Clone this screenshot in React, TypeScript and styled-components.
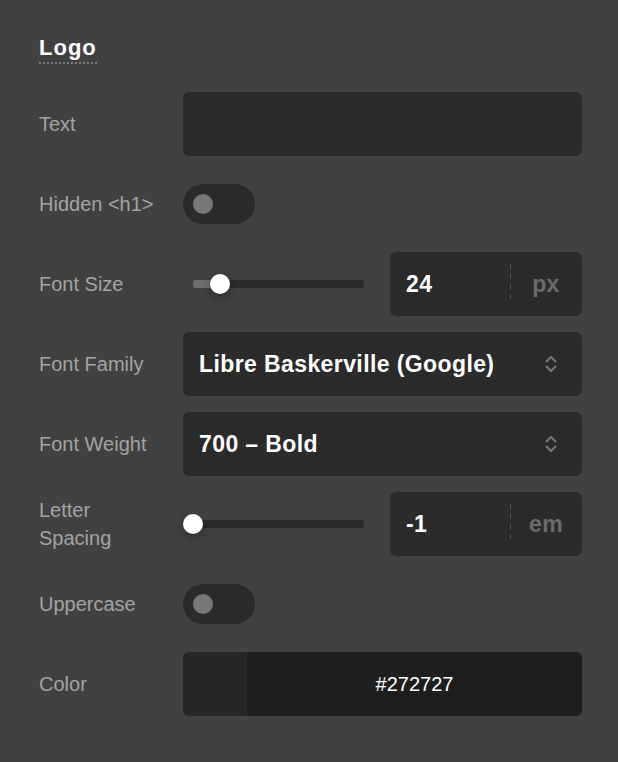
import React from "react";
import styled, { createGlobalStyle } from "styled-components";

const GlobalStyle = createGlobalStyle`
  html, body {
    margin: 0;
    background: #414141;
    font-family: "Liberation Sans", Arial, sans-serif;
  }
`;

const Panel = styled.div`
  padding: 37px 36px 46px 39px;
`;

const Title = styled.h2`
  display: inline-block;
  margin: 0 0 28px;
  padding-bottom: 3px;
  font-size: 22px;
  line-height: 22px;
  font-weight: 700;
  letter-spacing: 1px;
  color: #ffffff;
  border-bottom: 2px dotted #7a7a7a;
`;

const Grid = styled.div`
  display: grid;
  grid-template-columns: 144px 1fr;
  grid-auto-rows: 64px;
  row-gap: 16px;
`;

const Label = styled.label`
  align-self: center;
  max-width: 120px;
  font-size: 20px;
  line-height: 28px;
  color: #a3a3a3;
`;

const Field = styled.div`
  display: flex;
  align-items: center;
  gap: 16px;
  min-width: 0;
`;

const TextBox = styled.input`
  flex: 1;
  height: 64px;
  box-sizing: border-box;
  border: none;
  border-radius: 6px;
  background: #2b2b2b;
  padding: 0 16px;
  color: #fff;
  font: inherit;
  font-size: 20px;
  outline: none;
`;

const SwitchTrack = styled.div`
  position: relative;
  width: 72px;
  height: 40px;
  border-radius: 20px;
  background: #2b2b2b;
`;

const SwitchKnob = styled.span<{ $on?: boolean }>`
  position: absolute;
  top: 10px;
  left: ${(p) => (p.$on ? "42px" : "10px")};
  width: 20px;
  height: 20px;
  border-radius: 50%;
  background: #777777;
`;

const SliderWrap = styled.div`
  flex: 1;
  padding: 0 10px;
  height: 64px;
  display: flex;
  align-items: center;
`;

const Track = styled.div`
  position: relative;
  flex: 1;
  height: 8px;
  border-radius: 2px;
  background: #2b2b2b;
`;

const Fill = styled.div`
  position: absolute;
  left: 0;
  top: 0;
  bottom: 0;
  border-radius: 2px;
  background: #6e6e6e;
`;

const Thumb = styled.span`
  position: absolute;
  top: 50%;
  width: 20px;
  height: 20px;
  border-radius: 50%;
  background: #ffffff;
  transform: translate(-50%, -50%);
  box-shadow: 0 3px 8px rgba(0, 0, 0, 0.35);
`;

const NumberBox = styled.div`
  width: 192px;
  height: 64px;
  flex: none;
  display: flex;
  align-items: center;
  border-radius: 6px;
  background: #2b2b2b;
`;

const BoldValue = styled.span`
  font-size: 23px;
  font-weight: 700;
  letter-spacing: 0.4px;
  color: #ffffff;
`;

const NumberValue = styled(BoldValue)`
  flex: 1;
  padding-left: 16px;
`;

const Unit = styled.span`
  width: 72px;
  height: 40px;
  display: flex;
  align-items: center;
  justify-content: center;
  background: repeating-linear-gradient(
      to bottom,
      #555555 0 5px,
      transparent 5px 10px
    )
    left top / 1px 100% no-repeat;
  font-size: 23px;
  font-weight: 700;
  letter-spacing: 0.4px;
  color: #6b6b6b;
`;

const SelectBox = styled.div`
  flex: 1;
  height: 64px;
  display: flex;
  align-items: center;
  justify-content: space-between;
  padding: 0 25px 0 16px;
  border-radius: 6px;
  background: #2b2b2b;
`;

const ColorBox = styled.div`
  flex: 1;
  height: 64px;
  display: flex;
  border-radius: 6px;
  overflow: hidden;
  background: #1e1e1e;
`;

const Swatch = styled.div<{ $color: string }>`
  width: 64px;
  background: ${(p) => p.$color};
`;

const HexText = styled.div`
  flex: 1;
  display: flex;
  align-items: center;
  justify-content: center;
  font-size: 20px;
  color: #ffffff;
`;

const Chevrons = () => (
  <svg width="12" height="18" viewBox="0 0 12 18" fill="none">
    <polyline points="1,7 6,2 11,7" stroke="#7a7a7a" strokeWidth="2" />
    <polyline points="1,11 6,16 11,11" stroke="#7a7a7a" strokeWidth="2" />
  </svg>
);

const Switch: React.FC<{ on?: boolean }> = ({ on }) => (
  <SwitchTrack>
    <SwitchKnob $on={on} />
  </SwitchTrack>
);

interface SliderProps {
  value: number;
  min: number;
  max: number;
  unit: string;
}

const SliderNumber: React.FC<SliderProps> = ({ value, min, max, unit }) => {
  const pct = ((value - min) / (max - min)) * 100;
  return (
    <Field>
      <SliderWrap>
        <Track>
          <Fill style={{ width: `${pct}%` }} />
          <Thumb style={{ left: `${pct}%` }} />
        </Track>
      </SliderWrap>
      <NumberBox>
        <NumberValue>{value}</NumberValue>
        <Unit>{unit}</Unit>
      </NumberBox>
    </Field>
  );
};

const Select: React.FC<{ value: string }> = ({ value }) => (
  <Field>
    <SelectBox>
      <BoldValue>{value}</BoldValue>
      <Chevrons />
    </SelectBox>
  </Field>
);

export default function App() {
  const color = "#272727";
  return (
    <Panel>
      <GlobalStyle />
      <Title>Logo</Title>
      <Grid>
        <Label>Text</Label>
        <Field>
          <TextBox defaultValue="" />
        </Field>

        <Label>Hidden &lt;h1&gt;</Label>
        <Field>
          <Switch />
        </Field>

        <Label>Font Size</Label>
        <SliderNumber value={24} min={18} max={56} unit="px" />

        <Label>Font Family</Label>
        <Select value="Libre Baskerville (Google)" />

        <Label>Font Weight</Label>
        <Select value="700 – Bold" />

        <Label>Letter Spacing</Label>
        <SliderNumber value={-1} min={-1} max={1} unit="em" />

        <Label>Uppercase</Label>
        <Field>
          <Switch />
        </Field>

        <Label>Color</Label>
        <Field>
          <ColorBox>
            <Swatch $color={color} />
            <HexText>{color}</HexText>
          </ColorBox>
        </Field>
      </Grid>
    </Panel>
  );
}
